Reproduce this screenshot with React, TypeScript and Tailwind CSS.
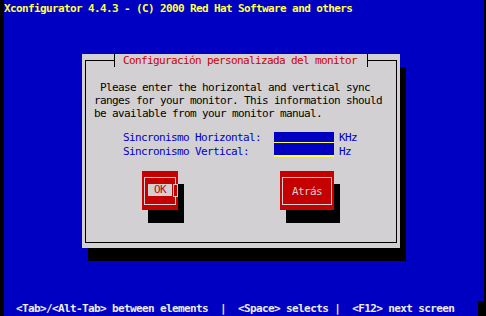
const mono =
  "font-['DejaVu_Sans_Mono','Liberation_Mono',monospace] text-[11px] tracking-[-0.62px] leading-[13px] whitespace-pre";

export default function App() {
  return (
    <div className="w-[486px] h-[316px] bg-black pl-[4px] flex">
      <div className={`w-[480px] h-full bg-[#0000c2] flex flex-col ${mono}`}>
        <div className="pt-[2px] font-bold text-[#ffff44]">
          Xconfigurator 4.4.3 - (C) 2000 Red Hat Software and others
        </div>

        {/* dialog window */}
        <div className="mt-[39px] ml-[78px] w-[318px] h-[194px] bg-[#d3d0d4] shadow-[6px_13px_0_0_#000] pt-[6px] px-[3px] pb-[5px]">
          <div className="relative h-full border border-black">
            <div className="absolute left-[28px] top-[-7px] h-[13px] border-x border-black bg-[#d3d0d4] pl-[8px] pr-[10px] text-[#cc0000]">
              Configuración personalizada del monitor
            </div>

            <div className="mt-[20px] pl-[8px] text-black">
              {" Please enter the horizontal and vertical sync\nranges for your monitor. This information should\nbe available from your monitor manual."}
            </div>

            <div className="mt-[11px] flex pl-[37px] text-[#0000c2]">
              <div className="w-[151px] leading-[14px]">
                <div>Sincronismo Horizontal:</div>
                <div>Sincronismo Vertical:</div>
              </div>
              <div className="w-[60px] pt-[1px]">
                <div className="h-[11px] bg-[#0000c2] border-b border-[#ffff44]" />
                <div className="h-[14px] bg-[#0000c2] border-b-2 border-[#ffff44]" />
              </div>
              <div className="ml-[5px] leading-[14px]">
                <div>KHz</div>
                <div>Hz</div>
              </div>
            </div>

            <div className="mt-[12px] flex pl-[56px]">
              <div className="relative w-[36px] h-[39px] bg-[#c40000] shadow-[6px_13px_0_0_#000] pt-[6px] pl-[2px]">
                <div className="w-[32px] h-[28px] border border-[#d3d0d4] pt-[6px] pl-[3px]">
                  <div className="w-[24px] h-[12px] bg-[#d3d0d4] text-[#cc0000] leading-[12px]">
                    {" OK "}
                  </div>
                </div>
                <div className="absolute left-[31px] top-[13px] w-[5px] h-[13px] border border-[#d3d0d4] bg-[#c40000]" />
              </div>

              <div className="ml-[102px] w-[54px] h-[39px] bg-[#c40000] shadow-[6px_13px_0_0_#000] pt-[6px] pl-[2px]">
                <div className="w-[50px] h-[28px] border border-[#d3d0d4] pt-[7px] pl-[9px] text-[#d3d0d4]">
                  Atrás
                </div>
              </div>
            </div>
          </div>
        </div>

        <div className="mt-auto flex h-[15px]">
          <div className="pl-[12px] pt-[1px] font-bold text-[#ececec]">
            {"<Tab>/<Alt-Tab> between elements  |  <Space> selects |  <F12> next screen"}
          </div>
          <div className="ml-auto w-[6px] h-full bg-black" />
        </div>
      </div>
    </div>
  );
}
